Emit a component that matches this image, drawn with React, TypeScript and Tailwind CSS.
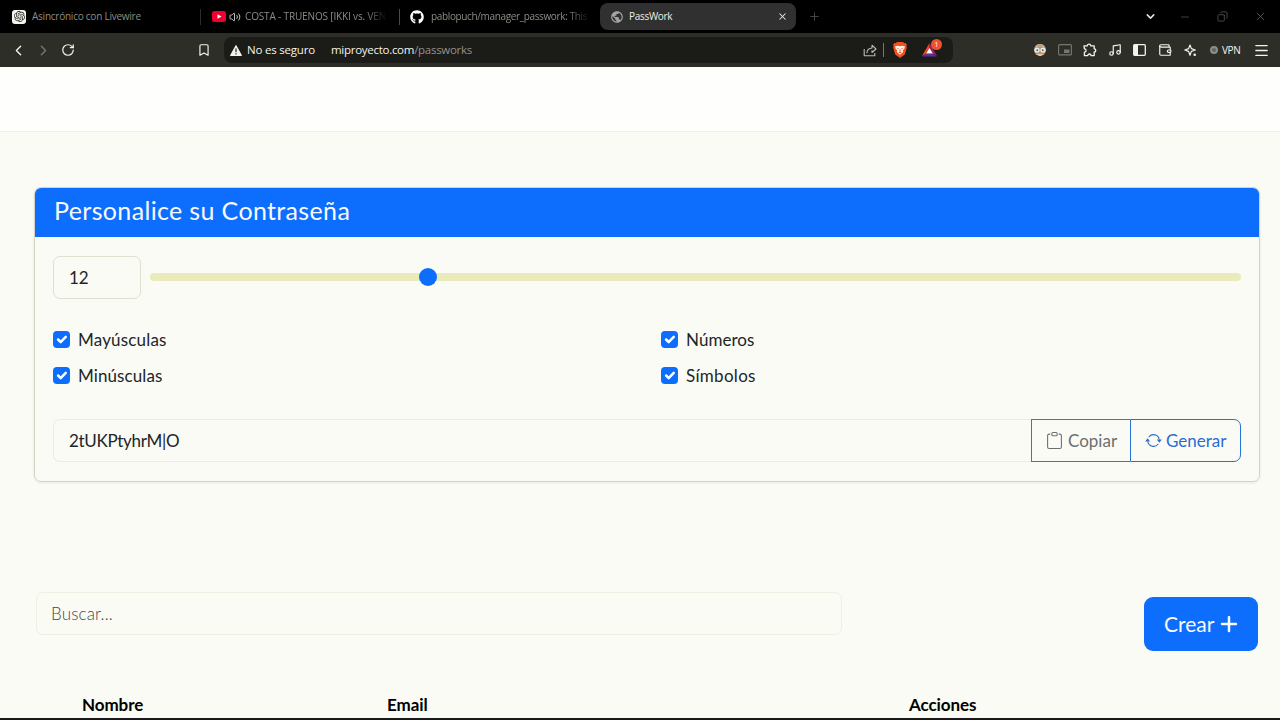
import React, { useState } from "react";
import { SiOpenai } from "react-icons/si";
import { FaGithub, FaPlus } from "react-icons/fa6";
import { MdPublic } from "react-icons/md";
import { BsArrowRepeat, BsClipboard } from "react-icons/bs";
import {
  Bookmark,
  ChevronDown,
  ChevronLeft,
  ChevronRight,
  Copy,
  Menu,
  Minus,
  Music,
  Plus,
  RotateCw,
  Volume2,
  Wallet,
  X,
} from "lucide-react";

const fade = "[mask-image:linear-gradient(to_right,black_85%,transparent)]";

function YoutubeIcon() {
  return (
    <svg viewBox="0 0 14 11" className="h-[11px] w-[14px] shrink-0">
      <rect width="14" height="11" rx="2.5" fill="#f0002c" />
      <path d="M5.5 3.2v4.6l4-2.3z" fill="#fff" />
    </svg>
  );
}

function BraveIcon() {
  return (
    <svg viewBox="0 0 14 16" className="h-4 w-3.5 shrink-0">
      <path d="M4 0h6l1.3 1.2 1.4-.1 1.2 2-.5 1.2.4 1.3-2 7L7 16l-4.8-3.4-2-7L.6 4.3.1 3.1l1.2-2 1.4.1z" fill="#f2511f" />
      <path d="M2 4.5 4.5 3.8 7 4.3l2.5-.5 2.5.7-.8 2.3-1.5 1.8.5 1.4L7 12.8 3.8 10l.5-1.4-1.5-1.8z" fill="#fff3ea" />
      <path d="m3.6 5.8 2.2.7-.5.8zM10.4 5.8l-2.2.7.5.8zM7 6.5l.7 2.7L7 9.8l-.7-.6zM5.2 10.2 7 9.9l1.8.3L7 11.3z" fill="#e2481b" />
    </svg>
  );
}

function RewardsIcon() {
  return (
    <div className="relative h-[14px] w-[15px] shrink-0">
      <svg viewBox="0 0 15 14" className="h-full w-full">
        <path d="M7.5 0 0 13l4.5-2.6 3-5.4z" fill="#ee4a22" />
        <path d="M7.5 0 15 13l-4.5-2.6-3-5.4z" fill="#a02068" />
        <path d="M0 13.4h15l-4.5-3h-6z" fill="#5f2c9c" />
        <path d="m7.5 5 3.3 5.5H4.2z" fill="#fff" />
      </svg>
      <span className="absolute -top-[4px] left-[9px] flex h-[11px] w-[11px] items-center justify-center rounded-full bg-[#f3502a] text-[7px] leading-none text-white">
        1
      </span>
    </div>
  );
}

function ShareIcon() {
  return (
    <svg viewBox="0 0 14 14" className="h-3.5 w-3.5" fill="none" stroke="#b9b9b9" strokeWidth="1.1" strokeLinejoin="round">
      <path d="M1.2 6v6.8h10.6V10" />
      <path d="M3.8 10.2c.3-3.2 2-5 5.2-5.2V2.2L13 6 9 9.500V7.200" />
    </svg>
  );
}

function AvatarIcon() {
  return (
    <svg viewBox="0 0 14 14" className="h-3.5 w-3.5">
      <circle cx="7" cy="7" r="6" fill="#c98f5e" />
      <path d="M1.600 4.500a6 6 0 0 1 10.800 0L7 3.500z" fill="#b9aa92" />
      <circle cx="4" cy="7" r="2.600" fill="#e2f0f2" />
      <circle cx="10" cy="7" r="2.600" fill="#e2f0f2" />
      <circle cx="4.200" cy="7.200" r="1" fill="#3e6d7c" />
      <circle cx="9.800" cy="7.200" r="1" fill="#3e6d7c" />
      <path d="M3.500 11.200h7L7 13z" fill="#e8e2d8" />
    </svg>
  );
}

function PipIcon() {
  return (
    <svg viewBox="0 0 14 12" className="h-3 w-3.5">
      <rect x=".6" y=".6" width="12.800" height="10.300" rx="1" fill="none" stroke="#77776e" strokeWidth="1.100" />
      <rect x="6" y="5.500" width="5.500" height="3.500" fill="#77776e" />
    </svg>
  );
}

function PuzzleIcon() {
  return (
    <svg viewBox="0 0 14 14" className="h-3.5 w-3.5" fill="none" stroke="#f4f4ea" strokeWidth="1.300" strokeLinejoin="round">
      <path d="M1 2.800h3.300a1.700 1.700 0 0 1 3.400 0H11.200V5.800a1.600 1.600 0 0 1 0 3.200v3.600H8a1.600 1.600 0 0 0-3.200 0H1.400V9.200a1.700 1.700 0 0 0 0-3.400z" />
    </svg>
  );
}

function SidebarIcon() {
  return (
    <svg viewBox="0 0 13 12" className="h-3 w-[13px]">
      <rect x=".7" y=".7" width="11.600" height="10.600" rx="1" fill="none" stroke="#f4f4ea" strokeWidth="1.300" />
      <path d="M.7.7h4.300v10.600H.7z" fill="#f4f4ea" />
    </svg>
  );
}

function SparkIcon() {
  return (
    <svg viewBox="0 0 13 13" className="h-[13px] w-[13px]" fill="none" stroke="#f4f4ea" strokeWidth="1.200" strokeLinejoin="round">
      <path d="M6 1 7.400 4.600 11.300 6 7.400 7.400 6 11.200 4.600 7.400.8 6l3.800-1.400z" />
      <circle cx="10.700" cy="10.700" r="1.300" fill="#f4f4ea" stroke="none" />
    </svg>
  );
}

function TabStrip() {
  return (
    <div className="flex h-[33px] items-center bg-black text-[10px] text-[#8c8c84]">
      <div className="flex h-4 w-[201px] items-center border-r border-[#2c2c2c] pl-[12px]">
        <span className="flex h-3.5 w-3.5 items-center justify-center rounded-[3px] bg-[#f5f5ee] text-[#222]">
          <SiOpenai size={11} />
        </span>
        <span className="ml-1.5 whitespace-nowrap tracking-[-0.24px]">Asincrónico con Livewire</span>
      </div>
      <div className="flex h-4 w-[199px] items-center border-r border-[#4a4a4a] pl-[11px]">
        <YoutubeIcon />
        <Volume2 size={12} className="ml-[3px] shrink-0 text-[#c4c4ba]" strokeWidth={2} />
        <span className={"ml-[4px] w-[142px] whitespace-nowrap tracking-[-0.15px] " + fade}>COSTA - TRUENOS [IKKI vs. VEN</span>
      </div>
      <div className="flex h-4 w-[200px] items-center pl-[10px]">
        <FaGithub size={14} className="shrink-0 text-white" />
        <span className={"ml-[7px] w-[160px] whitespace-nowrap tracking-[-0.36px] " + fade}>pablopuch/manager_passwork: This</span>
      </div>
      <div className="flex h-[27px] w-[196px] items-center rounded-lg bg-[#303030] pr-[8px] pl-[10px] text-[#eeeee4]">
        <MdPublic size={14} className="text-[#a5a5a0]" />
        <span className="ml-[5px] flex-1 tracking-[-0.3px]">PassWork</span>
        <X size={11} strokeWidth={2.200} />
      </div>
      <Plus size={13} strokeWidth={1.500} className="ml-[12px] text-[#55554c]" />
      <div className="ml-auto flex items-center pr-[13px]">
        <ChevronDown size={13} strokeWidth={2.800} className="text-[#e4e4da]" />
        <Minus size={12} strokeWidth={1.500} className="ml-[22px] text-[#55554c]" />
        <Copy size={11} strokeWidth={1.800} className="ml-[26px] rotate-90 text-[#55554c]" />
        <X size={13} strokeWidth={1.400} className="ml-[26px] text-[#66665c]" />
      </div>
    </div>
  );
}

function Toolbar() {
  return (
    <div className="flex h-[34px] items-center bg-[#2e2e29] text-[#f4f4ea]">
      <ChevronLeft size={17} strokeWidth={1.900} className="ml-[10px]" />
      <ChevronRight size={17} strokeWidth={1.900} className="ml-[8px] text-[#77776e]" />
      <RotateCw size={14} strokeWidth={2.100} className="ml-[9px]" />
      <Bookmark size={14} strokeWidth={2} className="ml-[122px]" />
      <div className="ml-[13px] flex h-[26px] w-[729px] items-center rounded-lg bg-[#1b1b18] pr-[16px] pl-[6px] text-[11.5px]">
        <svg viewBox="0 0 12 11" className="h-[11px] w-3">
          <path d="M6 .5 11.500 10.500H.5z" fill="#f4f4ea" stroke="#f4f4ea" strokeLinejoin="round" />
          <path d="M5.400 3.500h1.200v3.700H5.400zM5.400 8.200h1.200v1.200H5.400z" fill="#1b1b18" />
        </svg>
        <span className="ml-[5px] w-[68px] whitespace-nowrap tracking-[-0.2px]">No es seguro</span>
        <span className="ml-[16px] whitespace-nowrap tracking-[-0.28px]">
          miproyecto.com<span className="text-[#93938a]">/passworks</span>
        </span>
        <div className="ml-auto flex items-center">
          <ShareIcon />
          <span className="ml-[6px] h-3.5 w-px bg-[#77776e]" />
          <span className="ml-[9px] flex">
            <BraveIcon />
          </span>
          <span className="ml-[15px] flex">
            <RewardsIcon />
          </span>
        </div>
      </div>
      <div className="ml-auto flex items-center pr-[11px]">
        <AvatarIcon />
        <span className="ml-[11px] flex">
          <PipIcon />
        </span>
        <span className="ml-[11px] flex">
          <PuzzleIcon />
        </span>
        <Music size={14} strokeWidth={2} className="ml-[11px]" />
        <span className="ml-[11px] flex">
          <SidebarIcon />
        </span>
        <Wallet size={14} strokeWidth={2} className="ml-[12px]" />
        <span className="ml-[12px] flex">
          <SparkIcon />
        </span>
        <span className="ml-[13px] h-2 w-2 rounded-full border-2 border-[#8e8e88] bg-[#666660]" />
        <span className="ml-[4px] w-[19px] text-[10px] tracking-[-0.4px]">VPN</span>
        <Menu size={17} strokeWidth={1.800} className="ml-[12px] -mr-[1px]" />
      </div>
    </div>
  );
}

function CheckOption({ label, className }: { label: string; className: string }) {
  const [checked, setChecked] = useState(true);
  return (
    <label className="flex h-9 items-center">
      <input type="checkbox" className="sr-only" checked={checked} onChange={() => setChecked(!checked)} />
      <span className="mb-px flex h-[17px] w-[17px] items-center justify-center rounded-[4px] bg-[#0d6efd]">
        {checked && (
          <svg viewBox="0 0 20 20" className="h-[17px] w-[17px]" fill="none" stroke="#fff" strokeWidth="3" strokeLinecap="round" strokeLinejoin="round">
            <path d="m6 10 3 3 6-6" />
          </svg>
        )}
      </span>
      <span className={"ml-2 text-[17px] " + className}>{label}</span>
    </label>
  );
}

function PasswordCard() {
  return (
    <section className="mx-[20px] ml-[34px] h-[295px] overflow-hidden rounded-[7px] border border-[#d3d4c6] shadow-[0_1px_3px_rgba(0,0,0,0.08)]">
      <h2 className="flex h-[49px] items-center bg-[#0d6efd] pb-[3px] pl-[19px] text-[25px] tracking-[0.35px] text-[#f8fafc]">Personalice su Contraseña</h2>
      <div className="px-[18px] pt-[19px]">
        <div className="flex items-center">
          <div className="flex h-[43px] w-[88px] items-center rounded-[7px] border border-[#dfe0d0] pl-[15px] text-[17px]">12</div>
          <div className="mb-px ml-[9px] flex h-[18px] flex-1 items-center">
            <div className="flex h-[8px] w-full items-center rounded-full bg-[#e9ebbc]">
              <span className="ml-[269px] h-[18px] w-[18px] shrink-0 rounded-full bg-[#0d6efd]" />
            </div>
          </div>
        </div>
        <div className="mt-[23px] grid grid-cols-[608px_1fr]">
          <CheckOption label="Mayúsculas" className="tracking-[0.18px]" />
          <CheckOption label="Números" className="tracking-[0.05px]" />
          <CheckOption label="Minúsculas" className="tracking-[0.1px]" />
          <CheckOption label="Símbolos" className="tracking-[0.3px]" />
        </div>
        <div className="mt-[25px] flex h-[43px] text-[17px]">
          <div className="flex flex-1 items-center rounded-l-[7px] border border-r-0 border-[#eceddf] pl-[15px] tracking-[-0.3px]">2tUKPtyhrM|O</div>
          <button className="flex w-[99px] items-center border border-r-0 border-[#6c6f70] pl-[14px] text-[#6c6f70]">
            <BsClipboard size={17} />
            <span className="ml-[5px]">Copiar</span>
          </button>
          <button className="flex w-[111px] items-center rounded-r-[7px] border border-[#2673d8] pl-[14px] text-[#2b6bd6]">
            <BsArrowRepeat size={17} />
            <span className="ml-[4px]">Generar</span>
          </button>
        </div>
      </div>
    </section>
  );
}

export default function App() {
  return (
    <div className="flex h-[720px] w-[1280px] flex-col overflow-hidden border-b-2 border-[#191919] bg-[#fafbf4] font-['Open_Sans','Noto_Sans',sans-serif]">
      <TabStrip />
      <Toolbar />
      <nav className="h-[65px] shrink-0 border-b border-[#eff0e2] bg-[#fefefc]" />
      <main className="pt-[55px] font-['Lato','Open_Sans',sans-serif] text-[#212529]">
        <PasswordCard />
        <div className="mt-[110px] flex items-start justify-between pr-[22px] pl-[36px]">
          <div className="flex h-[43px] w-[806px] items-center rounded-[7px] border border-[#eff0e2] pl-[14px] text-[17px] font-light tracking-[0.15px] text-[#44484b]">Buscar...</div>
          <button className="mt-[5px] flex h-[54px] w-[114px] items-center rounded-[9px] bg-[#0d6efd] pl-[20px] text-[21px] text-[#f8fafc]">
            Crear
            <FaPlus size={20} className="mb-px ml-[5px]" />
          </button>
        </div>
        <div className="mt-[42px] grid grid-cols-[305px_522px_1fr] pl-[82px] text-[17px] leading-[24px] font-bold tracking-[-0.08px] text-black">
          <span>Nombre</span>
          <span>Email</span>
          <span>Acciones</span>
        </div>
      </main>
    </div>
  );
}
